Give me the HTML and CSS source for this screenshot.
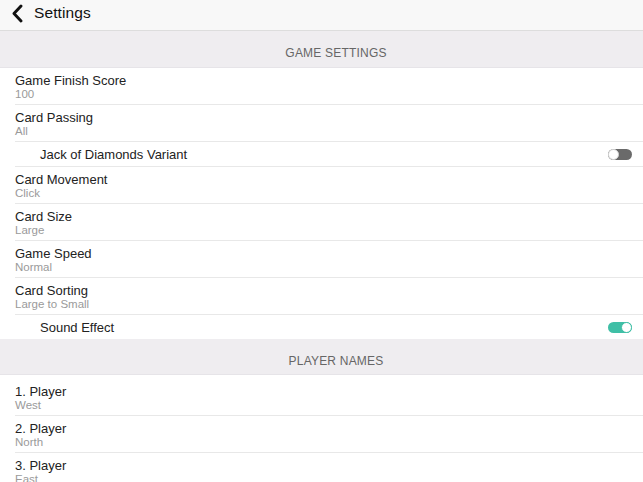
FILE: index.html
```html
<!DOCTYPE html>
<html>
<head>
<meta charset="utf-8">
<link rel="stylesheet" href="styles.css">
</head>
<body>
<div class="page">
  <header class="navbar">
    <svg class="back" width="13" height="19" viewBox="0 0 13 19"><path d="M10 2 L3 9.5 L10 17" fill="none" stroke="#111" stroke-width="2.9" stroke-linecap="round" stroke-linejoin="round"/></svg>
    <span class="nav-title">Settings</span>
  </header>

  <div class="section-head">GAME SETTINGS</div>
  <div class="list">
    <div class="row"><div class="title">Game Finish Score</div><div class="sub">100</div></div>
    <div class="row"><div class="title">Card Passing</div><div class="sub">All</div></div>
    <div class="row switch-row"><div class="title">Jack of Diamonds Variant</div><span class="toggle off"><span class="knob"></span></span></div>
    <div class="row"><div class="title">Card Movement</div><div class="sub">Click</div></div>
    <div class="row"><div class="title">Card Size</div><div class="sub">Large</div></div>
    <div class="row"><div class="title">Game Speed</div><div class="sub">Normal</div></div>
    <div class="row"><div class="title">Card Sorting</div><div class="sub">Large to Small</div></div>
    <div class="row switch-row last"><div class="title">Sound Effect</div><span class="toggle on"><span class="knob"></span></span></div>
  </div>

  <div class="section-head second">PLAYER NAMES</div>
  <div class="list players">
    <div class="row"><div class="title">1. Player</div><div class="sub">West</div></div>
    <div class="row"><div class="title">2. Player</div><div class="sub">North</div></div>
    <div class="row"><div class="title">3. Player</div><div class="sub">East</div></div>
  </div>
</div>
</body>
</html>
```

FILE: styles.css
```css
* { box-sizing: border-box; }
html, body { margin: 0; padding: 0; background: #fff; overflow: hidden; }
body { width: 643px; height: 482px; font-family: "Liberation Sans", Arial, sans-serif; color: #222; }
.page { display: flex; flex-direction: column; }

.navbar {
  height: 31px;
  background: #f8f8f8;
  border-bottom: 1px solid #dddddd;
  display: flex;
  align-items: center;
  padding-left: 11px;
  padding-bottom: 4px;
  gap: 10px;
}
.back { display: block; }
.nav-title { font-size: 15.5px; color: #111; letter-spacing: 0.1px; }

.section-head {
  height: 37px;
  background: #efedf0;
  border-bottom: 1px solid #e6e4e8;
  display: flex;
  align-items: center;
  justify-content: center;
  padding-top: 7px;
  padding-left: 29px;
  font-size: 12px;
  color: #666;
  letter-spacing: 0.2px;
}
.section-head.second { height: 36px; padding-top: 8px; }

.list { display: flex; flex-direction: column; }
.players { padding-top: 4px; }

.row {
  height: 37px;
  margin-left: 15px;
  border-bottom: 1px solid #e8e8e8;
  display: flex;
  flex-direction: column;
  justify-content: flex-start;
  padding-top: 6px;
}
.row.last { border-bottom: none; height: 24px; }
.title { font-size: 13px; color: #222; line-height: 14px; }
.sub { font-size: 11.5px; color: #9a9a9a; line-height: 13px; }

.switch-row {
  height: 25px;
  flex-direction: row;
  align-items: center;
  justify-content: space-between;
  padding-top: 1px;
  padding-left: 25px;
  padding-right: 11px;
}

.toggle {
  width: 24px;
  height: 11px;
  border-radius: 6px;
  position: relative;
  display: block;
}
.toggle.off { background: #6a6a6a; }
.toggle.on { background: #3fbfa6; }
.knob {
  position: absolute;
  top: 0;
  width: 11px;
  height: 11px;
  border-radius: 50%;
  background: #fff;
  border: 1px solid #d6d6d6;
}
.toggle.off .knob { left: 0; }
.toggle.on .knob { right: 0; border-color: #3fbfa6; }
```
